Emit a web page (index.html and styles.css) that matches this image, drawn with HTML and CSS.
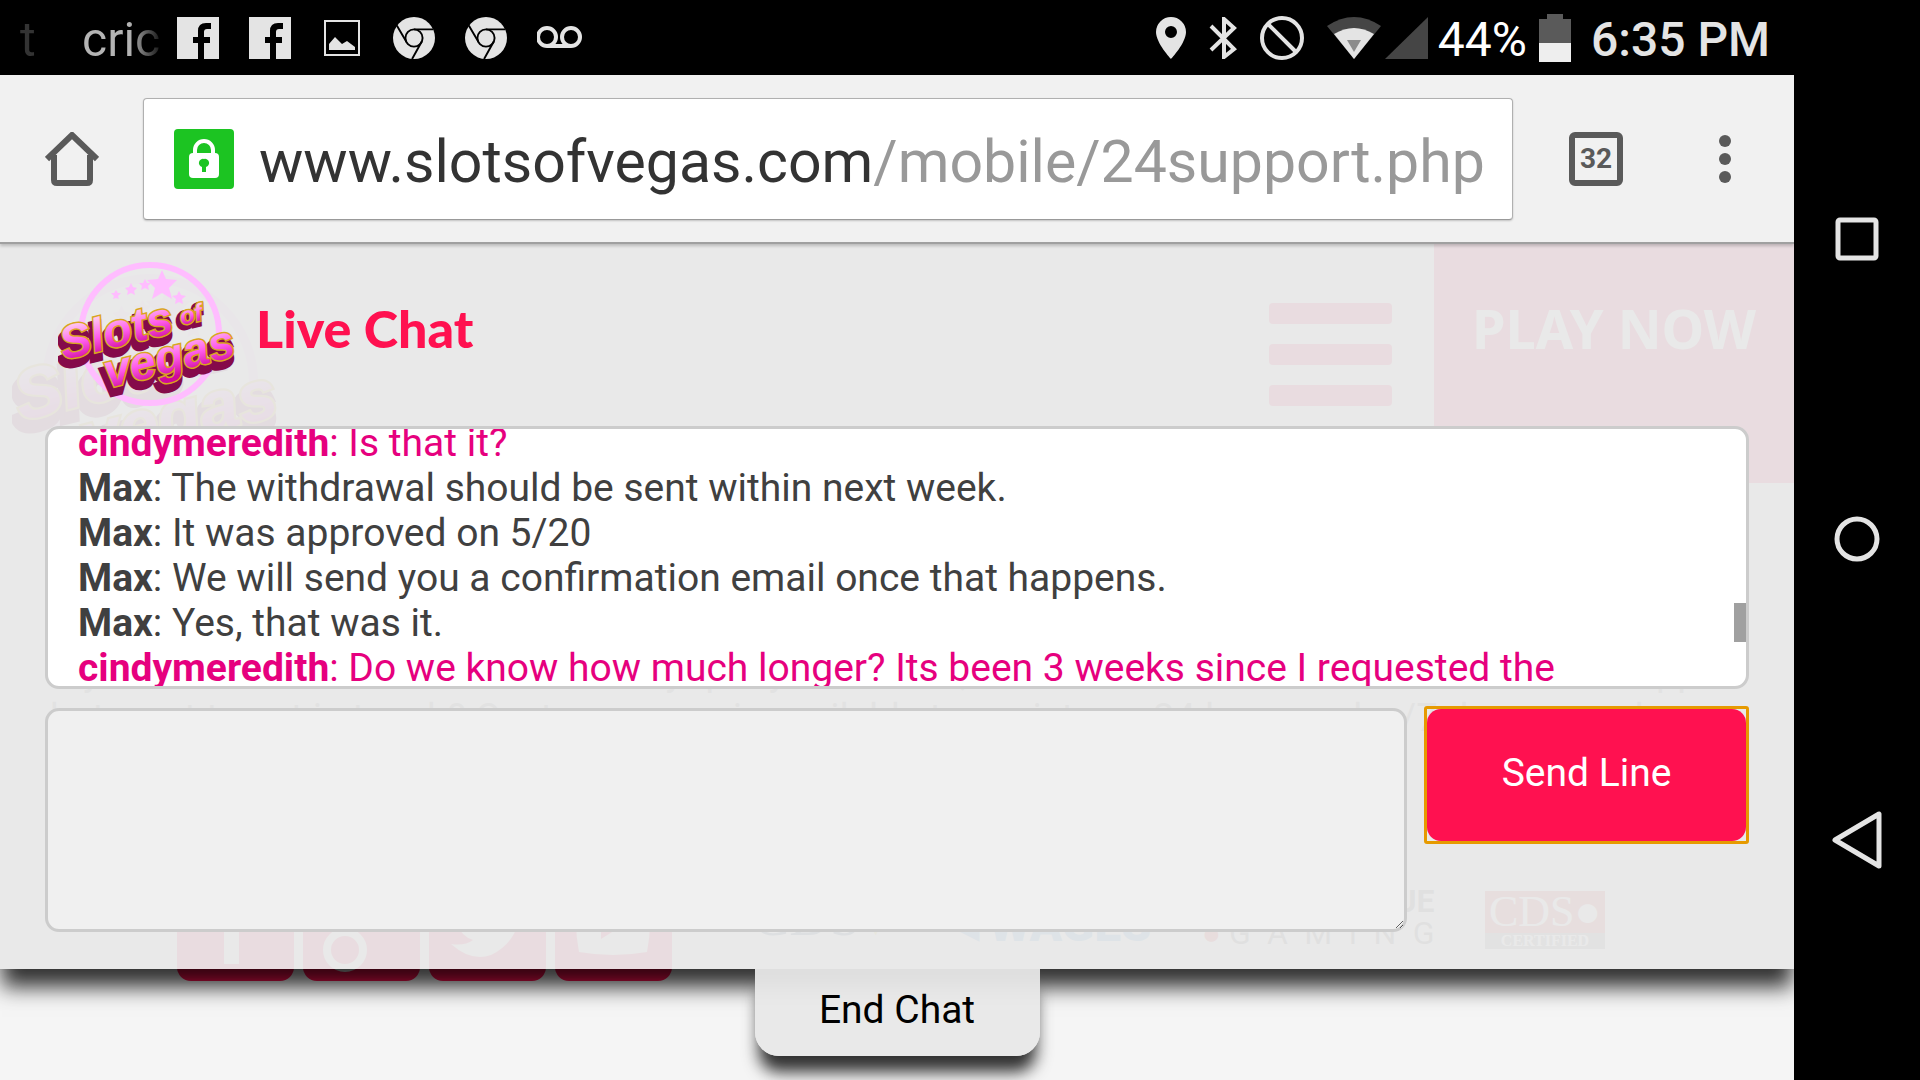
FILE: index.html
```
<!DOCTYPE html>
<html lang="en">

<head>
    <meta charset="UTF-8">
    <meta name="viewport" content="width=device-width, initial-scale=1.0">
    <title>Live Chat</title>
    <link rel="stylesheet" href="styles.css">
</head>

<body>
    <!-- shared shapes -->
    <svg class="defs" aria-hidden="true">
        <defs>
            <linearGradient id="pink" x1="0" y1="0" x2="0" y2="1">
                <stop offset="0.2" stop-color="#ffc4f0" />
                <stop offset="0.55" stop-color="#ff5cec" />
                <stop offset="0.9" stop-color="#cf0a9c" />
            </linearGradient>
            <symbol id="logo" viewBox="0 0 184 150">
                <circle cx="92" cy="76" r="69" fill="none" stroke="#ffbdff" stroke-width="6" />
                <g fill="#ffbdff">
                    <path d="M104 12l4 9 11 1-8 8 3 11-10-6-10 6 3-11-8-8 11-1z" />
                    <path d="M121 33l2 4 5 1-4 3 1 5-4-2-4 2 1-5-4-3 5-1z" />
                    <path d="M87 21l2 4 4 0-3 3 1 4-4-2-4 2 1-4-3-3 4 0z" />
                    <path d="M73 25l2 4 4 1-3 3 1 4-4-2-4 2 1-4-3-3 4-1z" />
                    <path d="M58 32l2 3 3 0-3 3 1 3-3-1-3 1 1-3-3-3 3 0z" />
                </g>
                <g class="logo-word logo-shade">
                    <text x="4" y="109" transform="rotate(-14 4 109)">Slots</text>
                    <text x="48" y="137" transform="rotate(-14 48 137)">vegas</text>
                    <text class="logo-small" x="122" y="70" transform="rotate(-14 122 70)">of</text>
                </g>
                <g class="logo-word">
                    <text x="6" y="102" transform="rotate(-14 6 102)">Slots</text>
                    <text class="logo-small" x="124" y="67" transform="rotate(-14 124 67)">of</text>
                    <text x="50" y="130" transform="rotate(-14 50 130)">vegas</text>
                </g>
            </symbol>
            <symbol id="facebook" viewBox="0 0 42 42">
                <path d="M0 0H42V42H27V26H33V20H27V15Q27 12 30 12H34V6H29Q21 6 21 14V20H16V26H21V42H0Z" />
            </symbol>
            <symbol id="chrome" viewBox="0 0 44 44">
                <circle cx="22" cy="22" r="22" />
                <g fill="none" stroke="#000" stroke-width="2">
                    <circle cx="22" cy="22" r="9" />
                    <path d="M22 13H42M14 26L4 9M30 26L20 44" />
                </g>
            </symbol>
        </defs>
    </svg>

    <div class="screen">
        <div class="statusbar">
            <span class="ticker ticker-old">t</span>
            <span class="ticker">cric</span>
            <div class="notices">
                <svg class="notice" width="42" height="42"><use href="#facebook" /></svg>
                <svg class="notice" width="42" height="42"><use href="#facebook" /></svg>
                <svg class="notice" width="42" height="42" viewBox="0 0 42 42">
                    <path fill-rule="evenodd" d="M3 3H39V39H3ZM5 5V37H37V5Z" />
                    <path d="M8 33V27L14 20 21 27 26 24 34 30V33Z" />
                </svg>
                <svg class="notice" width="42" height="42"><use href="#chrome" /></svg>
                <svg class="notice" width="42" height="42"><use href="#chrome" /></svg>
                <svg class="notice" width="46" height="42" viewBox="0 0 46 42">
                    <g fill="none" stroke="#e4e4e4" stroke-width="4">
                        <circle cx="10" cy="20" r="9" />
                        <circle cx="34" cy="20" r="9" />
                        <path d="M10 29H34" />
                    </g>
                </svg>
            </div>
            <div class="signals">
                <svg class="notice" width="30" height="42" viewBox="0 0 30 42">
                    <path fill-rule="evenodd" d="M15 0A15 15 0 0 0 0 15C0 26 15 42 15 42S30 26 30 15A15 15 0 0 0 15 0ZM15 9A6 6 0 1 1 15 21A6 6 0 1 1 15 9Z" />
                </svg>
                <svg class="notice" width="28" height="42" viewBox="0 0 28 42">
                    <path d="M2 9L25 32 15 40V2L25 11 2 33" fill="none" stroke="#e4e4e4" stroke-width="4" />
                </svg>
                <svg class="notice" width="44" height="44" viewBox="0 0 44 44">
                    <g fill="none" stroke="#e4e4e4" stroke-width="4">
                        <circle cx="22" cy="22" r="20" />
                        <path d="M8 8L36 36" />
                    </g>
                </svg>
                <svg class="notice wifi" width="54" height="42" viewBox="0 0 54 42">
                    <path d="M0 9Q27-9 54 9L27 42Z" fill="#454545" />
                    <path d="M7 17Q27 5 47 17L27 42Z" />
                    <path d="M20 23H34L27 35Z" fill="#8c8c8c" />
                </svg>
                <svg class="cell" width="43" height="42" viewBox="0 0 43 42">
                    <path d="M43 0V42H0Z" fill="#454545" />
                </svg>
                <span class="percent">44%</span>
                <svg class="battery" width="32" height="48" viewBox="0 0 32 48">
                    <path d="M8 0H24V5H32V29H0V5H8Z" fill="#5a5a5a" />
                    <path d="M0 29H32V48H0Z" fill="#eee" />
                </svg>
                <span class="clock">6:35 PM</span>
            </div>
        </div>

        <div class="toolbar">
            <button class="tool" type="button" aria-label="Home">
                <svg width="54" height="54" viewBox="0 0 54 54">
                    <path d="M2 27L27 3 52 27M9 23V48Q9 51 12 51H42Q45 51 45 48V23" fill="none" stroke="#5a5a5a" stroke-width="6" />
                </svg>
            </button>
            <div class="omnibox">
                <svg class="lock" width="60" height="60" viewBox="0 0 60 60">
                    <rect width="60" height="60" rx="4" fill="#1cc422" />
                    <path d="M21 26V21a9 9 0 0 1 18 0V26" fill="none" stroke="#fff" stroke-width="4" />
                    <rect x="15" y="24" width="30" height="25" rx="4" fill="#fff" />
                    <path d="M30 30a4 4 0 0 1 2 8V43H28V38a4 4 0 0 1 2-8Z" fill="#1cc422" />
                </svg>
                <span class="url">www.slotsofvegas.com<span class="path">/mobile/24support.php</span></span>
            </div>
            <button class="tabs" type="button">32</button>
            <button class="tool" type="button" aria-label="Menu">
                <svg width="12" height="54" viewBox="0 0 12 54" fill="#5a5a5a">
                    <circle cx="6" cy="9" r="6" />
                    <circle cx="6" cy="27" r="6" />
                    <circle cx="6" cy="45" r="6" />
                </svg>
            </button>
        </div>

        <div class="viewport">
            <!-- casino page, dimmed behind the chat -->
            <div class="site">
                <div class="site-header">
                    <svg class="site-logo" width="276" height="225"><use href="#logo" /></svg>
                    <div class="burger"><i></i><i></i><i></i></div>
                    <a class="play" href="#">PLAY NOW</a>
                </div>
                <p class="site-text">If you have a concern or need an easy query answered, our team are there to assist via chat or app<br>
                    but want to get in touch? Customer care is available to assist you 24 hours a day/7 days a week</p>
                <div class="site-footer">
                    <div class="social">
                        <svg viewBox="0 0 117 117"><path d="M47 100V58H36V44H47V34Q47 17 66 17H78V32H70Q62 32 62 39V44H78L76 58H62V100Z" /></svg>
                        <svg viewBox="0 0 117 117">
                            <g fill="none" stroke="#f5f5f5" stroke-width="8">
                                <ellipse cx="42" cy="86" rx="18" ry="18" />
                                <circle cx="46" cy="40" r="16" />
                                <path d="M46 24H72M56 54L44 68" />
                            </g>
                        </svg>
                        <svg viewBox="0 0 117 117"><path d="M22 80Q36 82 44 76 32 72 29 61H36Q25 54 24 43L32 45Q22 35 28 24 42 40 60 41 58 24 72 21 82 20 88 27L99 23 92 34 100 33 92 41Q91 77 62 91 42 98 22 80Z" /></svg>
                        <svg viewBox="0 0 117 117"><path fill-rule="evenodd" d="M24 28Q58 22 92 28 98 58 92 88 58 94 24 88 18 58 24 28ZM46 42V75L73 58Z" /></svg>
                    </div>
                    <div class="partners">
                        <span class="cds">CDS<b>&#9660;</b></span>
                        <span class="wages">&#9668;WAGES</span>
                        <span class="gaming"><b>REVENUE</b><span><i>&#9679;</i> G&ensp;A&ensp;M&ensp;I&ensp;N&ensp;G</span></span>
                        <span class="certified"><b>CDS&#9679;</b><small>CERTIFIED</small></span>
                    </div>
                </div>
            </div>

            <div class="chat">
                <div class="panel">
                    <div class="chat-header">
                        <svg width="184" height="150"><use href="#logo" /></svg>
                        <h1>Live Chat</h1>
                    </div>
                    <div class="log">
                        <div class="messages">
                            <p class="me"><b>cindymeredith</b>: Is that it?</p>
                            <p><b>Max</b>: The withdrawal should be sent within next week.</p>
                            <p><b>Max</b>: It was approved on 5/20</p>
                            <p><b>Max</b>: We will send you a confirmation email once that happens.</p>
                            <p><b>Max</b>: Yes, that was it.</p>
                            <p class="me"><b>cindymeredith</b>: Do we know how much longer? Its been 3 weeks since I requested the</p>
                        </div>
                        <div class="thumb"></div>
                    </div>
                    <form class="compose">
                        <textarea aria-label="Message"></textarea>
                        <div class="focus-ring">
                            <button class="send" type="button">Send Line</button>
                        </div>
                    </form>
                </div>
                <button class="end" type="button">End Chat</button>
            </div>
        </div>
    </div>

    <div class="navbar">
        <button type="button" aria-label="Recent apps">
            <svg width="54" height="54" viewBox="0 0 54 54"><rect x="8" y="8" width="38" height="38" rx="2" /></svg>
        </button>
        <button type="button" aria-label="Home screen">
            <svg width="54" height="54" viewBox="0 0 54 54"><circle cx="27" cy="28" r="20" /></svg>
        </button>
        <button type="button" aria-label="Back">
            <svg width="54" height="60" viewBox="0 0 54 60"><path d="M49 4V56L5 30Z" /></svg>
        </button>
    </div>
</body>

</html>
```

FILE: styles.css
```
* {
    box-sizing: border-box;
}

body {
    margin: 0;
    height: 100vh;
    display: flex;
    overflow: hidden;
    background: #000;
    font-family: Roboto, "Liberation Sans", sans-serif;
}

button {
    padding: 0;
    border: none;
    background: none;
    font-family: inherit;
}

svg {
    display: block;
}

.defs {
    position: absolute;
    width: 0;
    height: 0;
}

.screen {
    flex: 1;
    min-width: 0;
    display: flex;
    flex-direction: column;
}

/* status bar */
.statusbar {
    height: 75px;
    padding: 0 24px 0 20px;
    display: flex;
    align-items: center;
    color: #e4e4e4;
    font-size: 48px;
    line-height: 60px;
}

.ticker,
.percent,
.clock {
    padding-top: 4px;
}

.ticker {
    width: 95px;
    background: linear-gradient(to right, #b4b4b4 50%, #222 80%);
    background-clip: text;
    color: transparent;
}

.ticker-old {
    width: 62px;
    background: #333;
    background-clip: text;
}

.notices {
    display: flex;
    align-items: center;
    gap: 30px;
}

.notice {
    fill: #e4e4e4;
}

.signals {
    margin-left: auto;
    display: flex;
    align-items: center;
}

.signals .notice {
    margin-right: 23px;
}

.signals .wifi {
    margin-right: 4px;
}

.percent {
    margin: 0 12px 0 10px;
    color: #fff;
}

.clock {
    margin-left: 20px;
    font-weight: 500;
}

/* browser toolbar */
.toolbar {
    height: 169px;
    padding: 0 63px 0 45px;
    display: flex;
    align-items: center;
    position: relative;
    z-index: 1;
    background: #f1f1f1;
    border-bottom: 2px solid #a0a0a0;
    box-shadow: 0 2px 3px rgba(0, 0, 0, 0.2);
}

.omnibox {
    flex: 1;
    min-width: 0;
    height: 122px;
    margin: 0 56px 0 44px;
    padding: 0 28px 0 30px;
    display: flex;
    align-items: center;
    gap: 25px;
    background: #fff;
    border: 1px solid #b0b0b0;
    border-bottom-color: #999;
    border-radius: 4px;
    box-shadow: 0 1px 2px rgba(0, 0, 0, 0.2);
}

.lock {
    flex-shrink: 0;
}

.url {
    padding-top: 5px;
    font-size: 59px;
    color: #333;
    white-space: nowrap;
}

.path {
    color: #999;
}

.tabs {
    width: 54px;
    height: 54px;
    margin-right: 96px;
    border: 6px solid #5a5a5a;
    border-radius: 6px;
    color: #5a5a5a;
    font-size: 28px;
    font-weight: bold;
}

/* page area */
.viewport {
    flex: 1;
    position: relative;
    overflow: hidden;
    background: #f5f5f5;
}

.site {
    height: 100%;
    display: flex;
    flex-direction: column;
}

.site-header {
    height: 239px;
    display: flex;
}

.site-logo {
    margin: 24px auto 0 12px;
}

.burger {
    margin: 59px 42px 0 0;
    display: flex;
    flex-direction: column;
    gap: 20px;
}

.burger i {
    width: 123px;
    height: 21px;
    border-radius: 4px;
    background: #ff1150;
}

.play {
    width: 360px;
    padding-top: 46px;
    background: #ff1150;
    color: #fff;
    font: bold 54px/76px "Noto Sans", sans-serif;
    text-align: center;
    text-decoration: none;
}

.site-text {
    margin: 166px 45px 0 50px;
    font-size: 38px;
    line-height: 46px;
    color: #777;
    white-space: nowrap;
}

.site-footer {
    margin: auto 189px 99px 177px;
    display: flex;
    align-items: flex-end;
}

.social {
    display: flex;
    gap: 9px;
}

.social svg {
    width: 117px;
    height: 117px;
    border-radius: 14px;
    background: #ff1150;
    fill: #f5f5f5;
}

.partners {
    flex: 1;
    margin: 0 0 32px 80px;
    display: flex;
    justify-content: space-between;
    align-items: flex-end;
    line-height: 1;
}

.cds {
    font: 56px/48px "Liberation Serif", serif;
    color: #246;
}

.cds b {
    font-size: 30px;
    color: #dc3;
}

.wages {
    color: #2a8fd0;
    font-size: 48px;
    font-weight: 900;
}

.gaming {
    display: flex;
    flex-direction: column;
    align-items: flex-end;
    color: #555;
    font-size: 32px;
}

.gaming i {
    color: #d22;
}

.certified {
    width: 120px;
    display: flex;
    flex-direction: column;
    align-items: center;
    background: #777;
    color: #fff;
}

.certified b {
    align-self: stretch;
    background: #c33;
    font: 44px/42px "Liberation Serif", serif;
    text-align: center;
}

.certified small {
    font: bold 16px/16px "Liberation Serif", serif;
}

/* chat overlay, on top of the site */
.chat {
    position: absolute;
    top: 0;
    left: 0;
    right: 0;
    display: flex;
    flex-direction: column;
    align-items: center;
}

.panel {
    width: 100%;
    padding: 14px 45px 37px;
    background: rgba(232, 232, 232, 0.95);
    box-shadow: 0 20px 20px -2px rgba(0, 0, 0, 0.8);
}

.chat-header {
    height: 168px;
    padding-left: 13px;
    display: flex;
    gap: 14px;
}

.chat-header h1 {
    margin: 30px 0 0;
    color: #ff1150;
    font: 900 52px/80px Lato, sans-serif;
}

.log {
    height: 263px;
    display: flex;
    align-items: flex-start;
    overflow: hidden;
    background: #fff;
    border: 3px solid #ccc;
    border-radius: 14px;
}

.messages {
    flex: 1;
    margin-top: -8px;
    padding-left: 30px;
    color: #404040;
    font-size: 39px;
    line-height: 45px;
}

.messages p {
    margin: 0;
    white-space: nowrap;
}

.messages .me {
    color: #e6007e;
}

.thumb {
    width: 12px;
    height: 39px;
    margin-top: 174px;
    background: #a0a0a0;
}

.compose {
    margin-top: 17px;
    display: flex;
    align-items: flex-start;
    gap: 17px;
}

.compose textarea {
    flex: 1;
    height: 224px;
    margin-top: 2px;
    padding: 20px;
    border: 3px solid #ccc;
    border-radius: 14px;
    background: #f0f0f0;
    font: 39px/45px Roboto, sans-serif;
}

.focus-ring {
    border: 3px solid #e69a00;
    border-radius: 3px;
}

.send {
    display: block;
    width: 319px;
    height: 132px;
    padding-bottom: 4px;
    border-radius: 14px;
    background: #ff1150;
    color: #fff;
    font-size: 39px;
}

.end {
    width: 285px;
    height: 87px;
    padding-bottom: 6px;
    background: rgba(232, 232, 232, 0.95);
    border-radius: 0 0 24px 24px;
    box-shadow: 0 20px 16px -4px rgba(0, 0, 0, 0.8);
    font-size: 39px;
    color: #000;
}

/* logo lettering */
.logo-word {
    fill: url(#pink);
    stroke: #d9a520;
    stroke-width: 3px;
    paint-order: stroke;
    font: bold italic 47px "Liberation Sans", sans-serif;
}

.logo-shade {
    fill: #850a4a;
    stroke: #850a4a;
    stroke-width: 7px;
}

.logo-word .logo-small {
    font-size: 24px;
}

/* android navigation */
.navbar {
    width: 126px;
    padding: 212px 0 210px;
    display: flex;
    flex-direction: column;
    justify-content: space-between;
    align-items: center;
}

.navbar svg {
    fill: none;
    stroke: #e4e4e4;
    stroke-width: 5px;
    stroke-linejoin: round;
}
```
